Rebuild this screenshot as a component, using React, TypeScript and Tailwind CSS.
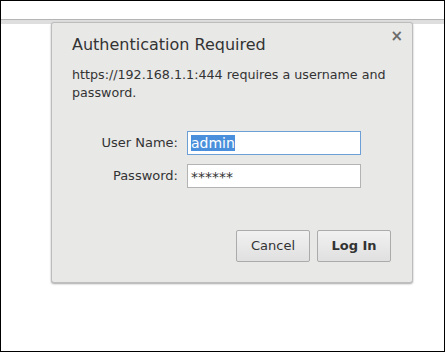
import React from 'react';

const App = () => {
    return (
        <div className="relative w-[445px] h-[352px] border border-black bg-white overflow-hidden" style={{ fontFamily: '"DejaVu Sans", sans-serif' }}>
            <div className="h-[18px] bg-white" />
            <div className="h-[5px] border-t border-[#b4b4b4] bg-[#dedede]" />

            <div className="absolute left-[50px] top-[21px] w-[362px] h-[261px] rounded-[3px] border border-[#bdbdbd] bg-[#e8e8e7] shadow-[0_1px_2px_rgba(0,0,0,0.35)] px-[20px] pt-[12px]">
                <button className="absolute right-[9px] top-[6px] text-[15px] font-bold text-[#6b6b6b] leading-none">×</button>

                <h1 className="text-[16px] leading-[20px] text-[#333333] font-normal">Authentication Required</h1>
                <p className="mt-[11px] text-[12.7px] leading-[18px] text-[#333333]">
                    https://192.168.1.1:444 requires a username and password.
                </p>

                <div className="mt-[29px] grid grid-cols-[106px_174px] gap-x-[9px] gap-y-[9px] items-center text-[13px] text-[#333333]">
                    <label className="text-right">User Name:</label>
                    <div className="h-[24px] border border-[#6b9fd6] bg-white flex items-center px-[3px]">
                        <span className="bg-[#4a8fdb] text-white text-[14px] leading-[16px]">admin</span>
                    </div>
                    <label className="text-right">Password:</label>
                    <div className="h-[24px] border border-[#b3b3b3] bg-white flex items-center px-[3px] text-[14px] pt-[2px]">
                        ******
                    </div>
                </div>

                <div className="mt-[42px] flex justify-end gap-[7px] pr-[1px]">
                    <button className="w-[74px] h-[32px] rounded-[2px] border border-[#ababab] bg-gradient-to-b from-[#f1f1f1] to-[#e0e0e0] text-[13px] text-[#333333]">Cancel</button>
                    <button className="w-[74px] h-[32px] rounded-[2px] border border-[#ababab] bg-gradient-to-b from-[#f1f1f1] to-[#e0e0e0] text-[13px] font-bold text-[#333333]">Log In</button>
                </div>
            </div>
        </div>
    );
};

export default App;
